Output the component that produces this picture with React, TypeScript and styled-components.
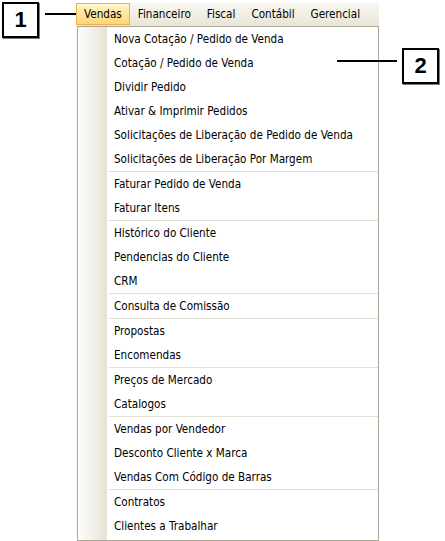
import * as React from 'react';
import styled, { createGlobalStyle } from 'styled-components';

const GlobalStyle = createGlobalStyle`
  html, body {
    margin: 0;
    padding: 0;
    background: #ffffff;
  }
  body {
    font-family: "DejaVu Sans Condensed", "DejaVu Sans", sans-serif;
  }
`;

const topMenus = ['Vendas', 'Financeiro', 'Fiscal', 'Contábil', 'Gerencial'];

// groups of items, separated by a line
const groups: string[][] = [
  [
    'Nova Cotação / Pedido de Venda',
    'Cotação / Pedido de Venda',
    'Dividir Pedido',
    'Ativar & Imprimir Pedidos',
    'Solicitações de Liberação de Pedido de Venda',
    'Solicitações de Liberação Por Margem',
  ],
  ['Faturar Pedido de Venda', 'Faturar Itens'],
  ['Histórico do Cliente', 'Pendencias do Cliente', 'CRM'],
  ['Consulta de Comissão'],
  ['Propostas', 'Encomendas'],
  ['Preços de Mercado', 'Catalogos'],
  ['Vendas por Vendedor', 'Desconto Cliente x Marca', 'Vendas Com Código de Barras'],
  ['Contratos', 'Clientes a Trabalhar'],
];

export default function App() {
  return (
    <>
      <GlobalStyle />
      <Page>
        <Window>
          <MenuBar>
            {topMenus.map((m, i) => (
              <TopItem key={m} active={i === 0}>
                {m}
              </TopItem>
            ))}
          </MenuBar>
          <Dropdown>
            <Gutter />
            <ItemList>
              {groups.map((g, gi) => (
                <React.Fragment key={gi}>
                  {gi > 0 && <Separator />}
                  {g.map((label) => (
                    <Item key={label}>{label}</Item>
                  ))}
                </React.Fragment>
              ))}
            </ItemList>
          </Dropdown>
        </Window>

        <Callout style={{ left: 2, top: 2 }}>1</Callout>
        <Leader style={{ left: 45, top: 13, width: 31 }} />

        <Callout style={{ left: 402, top: 48 }}>2</Callout>
        <Leader style={{ left: 337, top: 60, width: 60 }} />
      </Page>
    </>
  );
}

const Page = styled.div`
  position: relative;
  width: 445px;
  height: 541px;
  overflow: hidden;
  padding: 3px 0 0 76px;
  box-sizing: border-box;
`;

const Window = styled.div`
  width: 303px;
  display: flex;
  flex-direction: column;
`;

const MenuBar = styled.div`
  display: flex;
  height: 23px;
  background: linear-gradient(to bottom, #f7f6f0 0%, #efede2 60%, #e8e5d6 100%);
  font-size: 11.6px;
  color: #000;
`;

const TopItem = styled.div<{ active?: boolean }>`
  display: flex;
  align-items: center;
  padding: 0 7px 1px 7px;
  box-sizing: border-box;
  height: 22px;
  border: 1px solid ${(p) => (p.active ? '#f0b04a' : 'transparent')};
  background: ${(p) =>
    p.active ? 'linear-gradient(to bottom, #fff6d2 0%, #fde59a 50%, #fbd67a 100%)' : 'transparent'};
`;

const Dropdown = styled.div`
  display: flex;
  margin-left: 1px;
  height: 515px;
  border: 1px solid #aca899;
  background: #ffffff;
  box-sizing: border-box;
`;

const Gutter = styled.div`
  width: 29px;
  flex: none;
  background: linear-gradient(to right, #fdfdfb 0%, #f3f1ea 50%, #e5e2d4 100%);
`;

const ItemList = styled.div`
  flex: 1;
  display: flex;
  flex-direction: column;
`;

const Item = styled.div`
  height: 24px;
  display: flex;
  align-items: center;
  padding-left: 7px;
  font-size: 11.6px;
  color: #000;
  white-space: nowrap;
`;

const Separator = styled.div`
  height: 1px;
  margin-left: 2px;
  background: #e3e0d4;
`;

const Callout = styled.div`
  position: absolute;
  width: 37px;
  height: 36px;
  box-sizing: border-box;
  border: 2px solid #000;
  box-shadow: 1px 1px 0 #7a7a7a;
  background: #fff;
  display: flex;
  align-items: center;
  justify-content: center;
  font-family: "Liberation Sans", Arial, sans-serif;
  font-weight: bold;
  font-size: 22px;
  color: #000;
`;

const Leader = styled.div`
  position: absolute;
  height: 2px;
  background: #000;
`;
